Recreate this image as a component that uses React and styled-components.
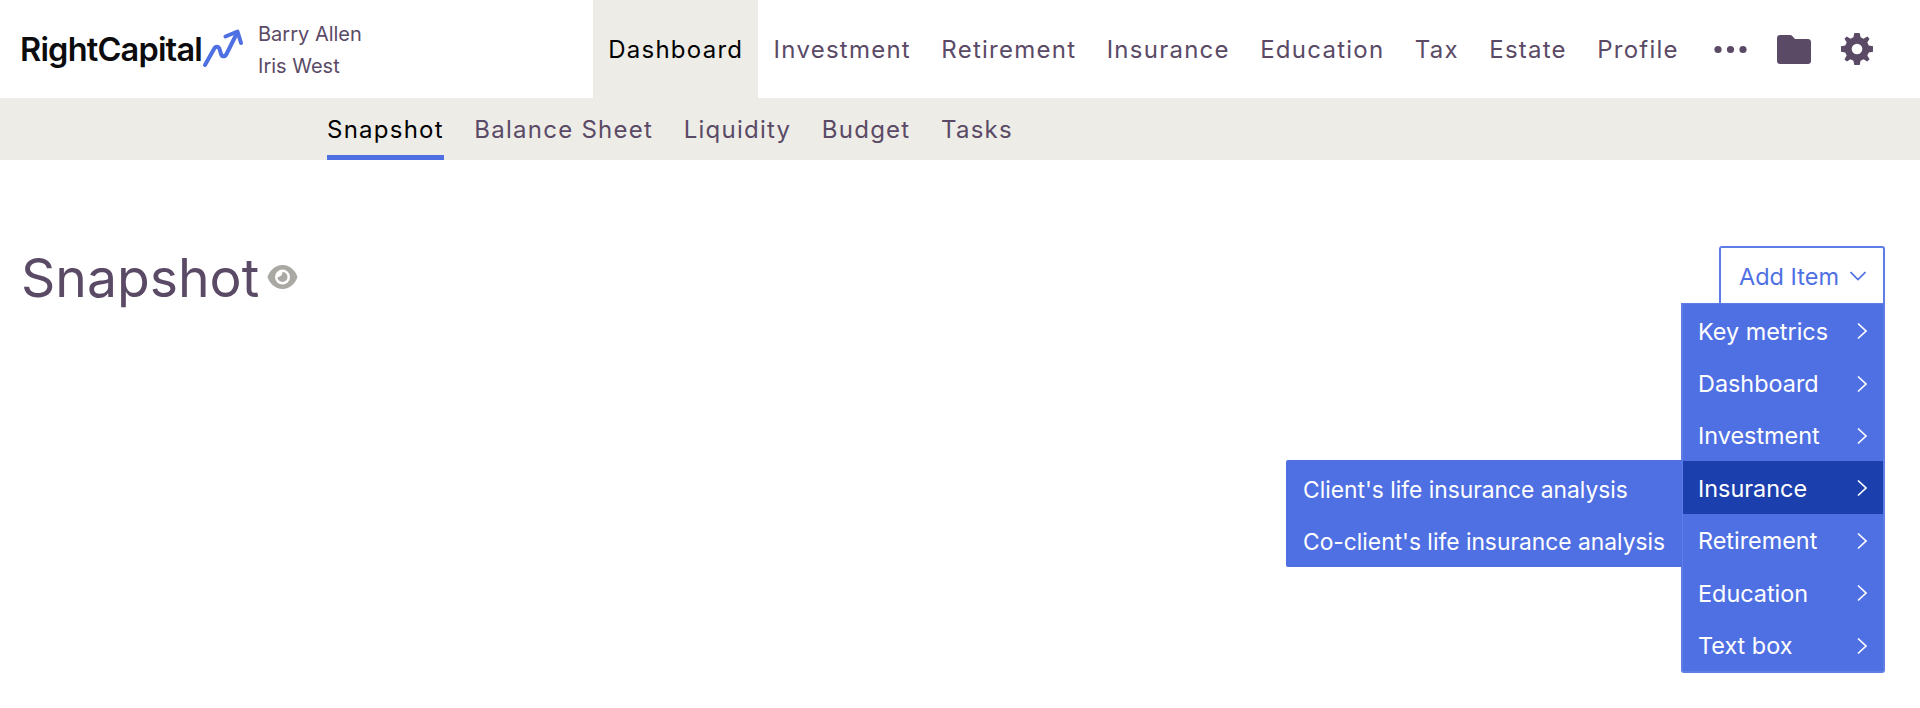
import React from 'react'
import styled, { createGlobalStyle } from 'styled-components'

const Global = createGlobalStyle`
  html, body { margin: 0; padding: 0; background: #fff; }
  body { font-family: 'Inter', 'Liberation Sans', sans-serif; color: #5a4a66; }
`

const Page = styled.div`
  min-height: 708px;
`

const Header = styled.header`
  display: flex;
  height: 98px;
  align-items: stretch;
`

const Brand = styled.div`
  display: flex;
  align-items: center;
  width: 593px;
  padding-left: 20px;
  box-sizing: border-box;
`

const LogoText = styled.span`
  font-size: 32.5px;
  font-weight: 600;
  letter-spacing: -0.8px;
  color: #0c0c0e;
`

const Names = styled.div`
  margin-left: 14px;
  font-size: 20px;
  line-height: 32px;
  padding-top: 1px;
  color: #5a4a66;
`

const Nav = styled.nav`
  display: flex;
  align-items: stretch;
`

const NavItem = styled.a`
  display: flex;
  align-items: center;
  padding: 1px 15.2px 0;
  font-size: 24px;
  letter-spacing: 1.25px;
  color: ${p => (p.$active ? '#000' : '#5a4a66')};
  background: ${p => (p.$active ? '#edece7' : 'transparent')};
`

const Icons = styled.div`
  display: flex;
  align-items: center;
  margin-left: 20px;
  gap: 30px;
`

const SubNav = styled.nav`
  display: flex;
  height: 62px;
  gap: 30.5px;
  padding-left: 327px;
  background: #edece7;
`

const SubItem = styled.a`
  display: flex;
  align-items: center;
  box-sizing: border-box;
  font-size: 24px;
  letter-spacing: 1.25px;
  color: ${p => (p.$active ? '#000' : '#5a4a66')};
  border-bottom: 5px solid ${p => (p.$active ? '#4f70e3' : 'transparent')};
  padding-top: 5px;
`

const TitleRow = styled.section`
  position: relative;
  display: flex;
  justify-content: space-between;
  align-items: flex-start;
  padding: 86px 35px 0 21px;
`

const TitleWrap = styled.div`
  display: flex;
  align-items: center;
  gap: 8px;
  padding-top: 1px;
`

const Title = styled.h1`
  margin: 0;
  padding-top: 2px;
  font-size: 53.5px;
  line-height: 57px;
  font-weight: 400;
  color: #5a4a66;
`

const AddButton = styled.button`
  display: flex;
  align-items: center;
  justify-content: space-between;
  box-sizing: border-box;
  width: 166px;
  height: 58px;
  padding: 0 17px 0 18px;
  border: 2px solid #5f7de6;
  border-bottom: none;
  border-radius: 3px 3px 0 0;
  background: #fff;
  color: #4f70e3;
  font-family: inherit;
  font-size: 23.5px;
`

const Menu = styled.ul`
  position: absolute;
  top: 143px;
  right: 35px;
  width: 204px;
  box-sizing: border-box;
  margin: 0;
  padding: 0;
  list-style: none;
  background: #4f70e3;
  border: 2px solid #5f7de6;
  border-top-width: 1px;
  border-radius: 0 0 3px 3px;
`

const MenuRow = styled.li`
  display: flex;
  align-items: center;
  justify-content: space-between;
  box-sizing: border-box;
  height: 52.4px;
  padding: 2px 13px 0 15px;
  color: #fff;
  font-size: 23.4px;
  background: ${p => (p.$active ? '#1c3fae' : 'transparent')};
`

const SubMenu = styled.ul`
  position: absolute;
  top: 300px;
  right: 238px;
  width: 396px;
  height: 107px;
  box-sizing: border-box;
  margin: 0;
  padding: 3px 0 0;
  list-style: none;
  background: #4f70e3;
  border-radius: 2px 0 0 2px;
`

const SubMenuRow = styled.li`
  display: flex;
  align-items: center;
  height: 52px;
  padding-left: 17px;
  color: #fff;
  font-size: 22.8px;
`

const Chevron = ({ dir = 'right', color = '#fff' }) => (
  <svg width="16" height="18" viewBox="0 0 16 18" fill="none" stroke={color} strokeWidth="1.7">
    {dir === 'right' ? <path d="M4 1.5 L12 9 L4 16.5" /> : <path d="M.5 5 L8 12.5 L15.5 5" />}
  </svg>
)

const LogoArrow = () => (
  <svg width="42" height="40" viewBox="0 0 42 40" fill="none" stroke="#4f70e3" strokeWidth="4" strokeLinecap="round" strokeLinejoin="round">
    <path d="M3 36 L12 20 C13.5 17 16.5 17 17.5 20 L19 25 C20 28 23 28 24.5 25 L35 4" />
    <path d="M23.5 7.5 L35.5 2.5 L39 14" />
  </svg>
)

const Dots = () => (
  <svg width="33" height="9" viewBox="0 0 33 9" fill="#5a4a66">
    <circle cx="4" cy="4.5" r="3.6" />
    <circle cx="16.5" cy="4.5" r="3.6" />
    <circle cx="29" cy="4.5" r="3.6" />
  </svg>
)

const Folder = () => (
  <svg width="34" height="29" viewBox="0 0 34 29" fill="#5a4a66">
    <path d="M3 0 H13 C14 0 14.6 .4 15.2 1 L18 4 H31 C32.7 4 34 5.3 34 7 V26 C34 27.7 32.7 29 31 29 H3 C1.3 29 0 27.7 0 26 V3 C0 1.3 1.3 0 3 0 Z" />
  </svg>
)

const Gear = () => (
  <svg width="32" height="32" viewBox="0 0 24 24" fill="#5a4a66">
    <path fillRule="evenodd" d="M10 0 H14 L14.7 3.2 C15.5 3.5 16.2 3.8 16.9 4.3 L19.7 2.6 L21.4 4.3 L19.7 7.1 C20.2 7.8 20.5 8.5 20.8 9.3 L24 10 V14 L20.8 14.7 C20.5 15.5 20.2 16.2 19.7 16.9 L21.4 19.7 L19.7 21.4 L16.9 19.7 C16.2 20.2 15.5 20.5 14.7 20.8 L14 24 H10 L9.3 20.8 C8.5 20.5 7.8 20.2 7.1 19.7 L4.3 21.4 L2.6 19.7 L4.3 16.9 C3.8 16.2 3.5 15.5 3.2 14.7 L0 14 V10 L3.2 9.3 C3.5 8.5 3.8 7.8 4.3 7.1 L2.6 4.3 L4.3 2.6 L7.1 4.3 C7.8 3.8 8.5 3.5 9.3 3.2 Z M12 8 A4 4 0 1 0 12 16 A4 4 0 1 0 12 8 Z" />
  </svg>
)

const Eye = () => (
  <svg width="31" height="26" viewBox="0 0 31 26">
    <path fill="#aaa8a3" d="M15.5 1 C23 1 28.5 7 30.5 13 C28.5 19 23 25 15.5 25 C8 25 2.5 19 .5 13 C2.5 7 8 1 15.5 1 Z" />
    <circle cx="15.5" cy="13" r="7.5" fill="#fff" />
    <path fill="#aaa8a3" d="M15.5 8 A5 5 0 1 1 10.5 13 C13 13 15.5 11 15.5 8 Z" />
  </svg>
)

const mainLinks = ['Dashboard', 'Investment', 'Retirement', 'Insurance', 'Education', 'Tax', 'Estate', 'Profile']
const subLinks = ['Snapshot', 'Balance Sheet', 'Liquidity', 'Budget', 'Tasks']
const menuItems = ['Key metrics', 'Dashboard', 'Investment', 'Insurance', 'Retirement', 'Education', 'Text box']
const subMenuItems = ["Client's life insurance analysis", "Co-client's life insurance analysis"]

export default function App() {
  return (
    <Page>
      <Global />
      <Header>
        <Brand>
          <LogoText>RightCapital</LogoText>
          <LogoArrow />
          <Names>
            <div>Barry Allen</div>
            <div>Iris West</div>
          </Names>
        </Brand>
        <Nav>
          {mainLinks.map(l => (
            <NavItem key={l} $active={l === 'Dashboard'}>{l}</NavItem>
          ))}
        </Nav>
        <Icons>
          <Dots />
          <Folder />
          <Gear />
        </Icons>
      </Header>
      <SubNav>
        {subLinks.map(l => (
          <SubItem key={l} $active={l === 'Snapshot'}>{l}</SubItem>
        ))}
      </SubNav>
      <TitleRow>
        <TitleWrap>
          <Title>Snapshot</Title>
          <Eye />
        </TitleWrap>
        <AddButton>
          Add Item
          <Chevron dir="down" color="#4f70e3" />
        </AddButton>
        <Menu>
          {menuItems.map(m => (
            <MenuRow key={m} $active={m === 'Insurance'}>
              {m}
              <Chevron />
            </MenuRow>
          ))}
        </Menu>
        <SubMenu>
          {subMenuItems.map(m => (
            <SubMenuRow key={m}>{m}</SubMenuRow>
          ))}
        </SubMenu>
      </TitleRow>
    </Page>
  )
}
